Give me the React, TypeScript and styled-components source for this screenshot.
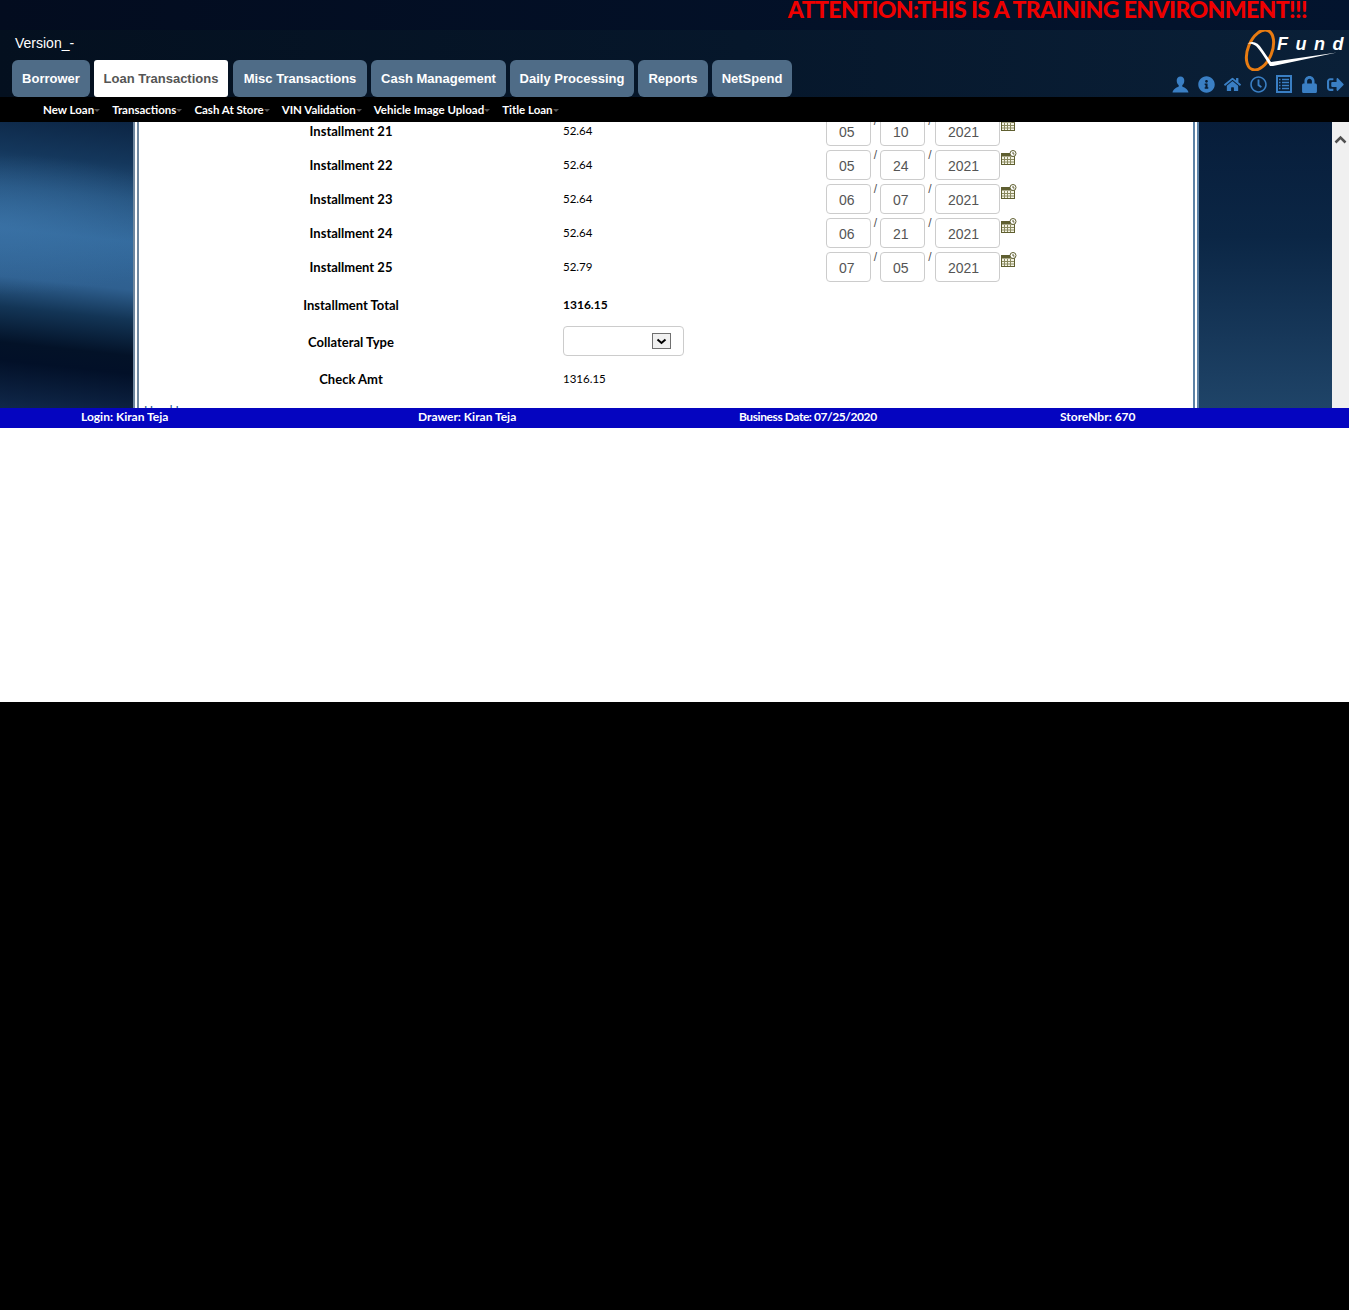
import React from 'react';
import styled, { createGlobalStyle } from 'styled-components';
import { FaInfoCircle, FaHome, FaRegClock, FaLock, FaSignOutAlt } from 'react-icons/fa';

const GlobalStyle = createGlobalStyle`
    html, body {
        margin: 0;
        padding: 0;
        background: #000;
    }
`;

const Page = styled.div`
    height: 702px;
    background: #fff;
    overflow: hidden;
    font-family: Lato, "Liberation Sans", sans-serif;
`;

const Header = styled.header`
    height: 97px;
    background: linear-gradient(90deg, #04101f 0%, #06172b 55%, #0a2038 100%);
`;

const TopStrip = styled.div`
    height: 30px;
    overflow: hidden;
    background: linear-gradient(90deg, #030c1f 0%, #03142e 100%);
    text-align: right;
    padding-right: 42px;
`;

const Attention = styled.div`
    margin-top: -6px;
    color: #f00000;
    font-weight: 900;
    font-size: 23px;
    line-height: 30px;
    letter-spacing: -0.6px;
`;

const HeaderBody = styled.div`
    display: flex;
    justify-content: space-between;
`;

const HeaderLeft = styled.div`
    padding-left: 12px;
`;

const Version = styled.div`
    height: 30px;
    padding: 5px 0 0 3px;
    box-sizing: border-box;
    color: #fff;
    font: 14px/17px "Liberation Sans", sans-serif;
`;

const Tabs = styled.nav`
    display: flex;
    gap: 4px;
`;

const Tab = styled.div<{ $active?: boolean; $width: number }>`
    width: ${({ $width }) => $width}px;
    height: 37px;
    text-align: center;
    border-radius: 6px;
    font: bold 13px/37px "Liberation Sans", sans-serif;
    color: ${({ $active }) => ($active ? '#555' : '#fff')};
    background: ${({ $active }) => ($active ? '#fff' : '#4f6c87')};
    ${({ $active }) => $active && 'margin-right: 1px; border-radius: 3px;'}
`;

const HeaderRight = styled.div`
    display: flex;
    flex-direction: column;
    align-items: flex-end;
    padding-right: 5px;
`;

const Logo = styled.div`
    position: relative;
    width: 100px;
    height: 41px;
    svg {
        display: block;
    }
`;

const LogoText = styled.span`
    position: absolute;
    left: 33px;
    top: 3px;
    color: #fff;
    font: italic bold 18px/22px "Liberation Sans", sans-serif;
    letter-spacing: 7.5px;
`;

const ToolIcons = styled.div`
    display: flex;
    align-items: center;
    height: 26px;
    gap: 9px;
    color: #3a7fc4;
    font-size: 17px;
    svg {
        display: block;
    }
`;

const SubNav = styled.nav`
    height: 25px;
    background: #000;
    display: flex;
    align-items: center;
    gap: 12px;
    padding-left: 43px;
`;

const SubItem = styled.span`
    color: #fff;
    font-size: 11.5px;
    font-weight: 700;
    &::after {
        content: '';
        display: inline-block;
        vertical-align: 2px;
        border-left: 3px solid transparent;
        border-right: 3px solid transparent;
        border-top: 3px solid #555;
    }
`;

const Main = styled.main`
    height: 286px;
    display: grid;
    grid-template-columns: 133px 1066px 133px 17px;
    overflow: hidden;
`;

const SideLeft = styled.div`
    background:
        radial-gradient(ellipse 200px 70px at 0% 36%, rgba(62, 118, 170, 0.55), rgba(62, 118, 170, 0) 100%),
        linear-gradient(186deg, #0c2544 0%, #14375c 14%, #25537f 26%, #336a9d 40%, #2f6090 56%, #133556 66%, #031228 78%, #021028 84%, #10284a 100%);
`;

const SideRight = styled.div`
    background: linear-gradient(180deg, #071d3a 0%, #0b2645 40%, #1f4468 100%);
`;

const Panel = styled.div`
    background: #fff;
    border-left: 6px double #6f879f;
    border-right: 6px double #5c82a6;
    overflow: hidden;
`;

const FormTable = styled.div`
    margin-top: -8px;
    display: grid;
    grid-template-columns: 422px 264px 1fr;
    margin-left: 1px;
`;

const Row = styled.div<{ $height: number }>`
    grid-column: 1 / -1;
    display: grid;
    grid-template-columns: subgrid;
    align-items: center;
    height: ${({ $height }) => $height}px;
`;

const Label = styled.div`
    text-align: center;
    color: #000;
    font-size: 13px;
    font-weight: 700;
`;

const Value = styled.div<{ $bold?: boolean }>`
    padding: 0 0 2px 1px;
    color: #000;
    font-size: ${({ $bold }) => ($bold ? '12px' : '11.5px')};
    font-weight: ${({ $bold }) => ($bold ? 700 : 400)};
`;

const DateCell = styled.div`
    align-self: start;
    padding-top: 2px;
    display: flex;
    align-items: flex-start;
`;

const DateBox = styled.div<{ $width: number }>`
    width: ${({ $width }) => $width}px;
    height: 30px;
    box-sizing: border-box;
    padding-left: 12px;
    border: 1px solid #ccc;
    border-radius: 4px;
    color: #555;
    font: 14px/30px "Liberation Sans", sans-serif;
`;

const Slash = styled.span<{ $width: number }>`
    width: ${({ $width }) => $width}px;
    margin-top: -2px;
    text-align: center;
    color: #555;
    font: 12px/14px "Liberation Sans", sans-serif;
`;

const CalendarIcon = styled.svg`
    margin: 0 0 0 1px;
`;

const SelectBox = styled.div`
    width: 121px;
    height: 30px;
    box-sizing: border-box;
    border: 1px solid #ccc;
    border-radius: 4px;
    display: flex;
    align-items: center;
    justify-content: flex-end;
    padding-right: 12px;
`;

const SelectArrow = styled.div`
    width: 19px;
    height: 16px;
    box-sizing: border-box;
    border: 1px solid #707070;
    background: #f0f0f0;
    display: flex;
    align-items: center;
    justify-content: center;
`;

const CutLine = styled.div`
    margin: 3px 0 0 5px;
    color: #1c4f8c;
    font-size: 12px;
    line-height: 14px;
`;

const ScrollBar = styled.div`
    background: #f0f0f0;
    display: flex;
    justify-content: center;
    padding-top: 13px;
    box-sizing: border-box;
`;

const StatusBar = styled.footer`
    height: 20px;
    box-sizing: border-box;
    padding: 0 0 3px 81px;
    background: #0505c0;
    display: grid;
    grid-template-columns: 337px 321px 321px 1fr;
    align-items: center;
`;

const StatusItem = styled.span<{ $tight?: boolean }>`
    color: #fff;
    font-size: 12px;
    font-weight: 700;
    ${({ $tight }) => $tight && 'letter-spacing: -0.42px;'}
`;

const tabs = [
    { name: 'Borrower', width: 78 },
    { name: 'Loan Transactions', width: 134 },
    { name: 'Misc Transactions', width: 134 },
    { name: 'Cash Management', width: 135 },
    { name: 'Daily Processing', width: 124 },
    { name: 'Reports', width: 70 },
    { name: 'NetSpend', width: 80 },
];
const subItems = ['New Loan', 'Transactions', 'Cash At Store', 'VIN Validation', 'Vehicle Image Upload', 'Title Loan'];
const installments = [
    { label: 'Installment 21', amount: '52.64', date: ['05', '10', '2021'] },
    { label: 'Installment 22', amount: '52.64', date: ['05', '24', '2021'] },
    { label: 'Installment 23', amount: '52.64', date: ['06', '07', '2021'] },
    { label: 'Installment 24', amount: '52.64', date: ['06', '21', '2021'] },
    { label: 'Installment 25', amount: '52.79', date: ['07', '05', '2021'] },
];

const Calendar = () => (
    <CalendarIcon width="16" height="15" viewBox="0 0 16 15">
        <rect x="0.5" y="3.5" width="13" height="11" fill="#f4f3e4" stroke="#5f5f30" />
        <rect x="0.5" y="3.5" width="13" height="3" fill="#5f5f30" />
        <path d="M3.5 7v7M6.5 7v7M9.5 7v7M1 9.5h12M1 12h12" stroke="#8a8a60" strokeWidth="1" />
        <circle cx="12" cy="3.5" r="3" fill="#fff" stroke="#5f5f30" />
        <path d="M12 2v2h1.5" fill="none" stroke="#5f5f30" strokeWidth="1" />
    </CalendarIcon>
);

const App: React.FC = () => {
    return (
        <Page>
            <GlobalStyle />
            <Header>
                <TopStrip>
                    <Attention>ATTENTION:THIS IS A TRAINING ENVIRONMENT!!!</Attention>
                </TopStrip>
                <HeaderBody>
                    <HeaderLeft>
                        <Version>Version_-</Version>
                        <Tabs>
                            {tabs.map((tab) => (
                                <Tab key={tab.name} $width={tab.width} $active={tab.name === 'Loan Transactions'}>{tab.name}</Tab>
                            ))}
                        </Tabs>
                    </HeaderLeft>
                    <HeaderRight>
                        <Logo>
                            <svg width="100" height="41" viewBox="0 0 100 41">
                                <ellipse cx="16" cy="20" rx="12" ry="21" transform="rotate(22 16 20)" fill="none" stroke="#e87c12" strokeWidth="3" />
                                <path d="M3 14 C8 10 14 12 18 19 L27 32 L93 22.5 L29 36 L26 36 C21 28 16 20 12 16 C9 14 6 13 3 14Z" fill="#fff" />
                            </svg>
                            <LogoText>Fund</LogoText>
                        </Logo>
                        <ToolIcons>
                            <svg width="17" height="17" viewBox="0 0 17 17">
                                <path d="M8.5 0.5c-2.5 0-3.8 2-3.8 4.2 0 2 1 3.6 2 4.4v1.4C5 11.5 1 12.8.5 16.5h16c-.5-3.7-4.5-5-6.2-6v-1.4c1-.8 2-2.4 2-4.4 0-2.2-1.3-4.2-3.8-4.2z" fill="currentColor" />
                            </svg>
                            <FaInfoCircle />
                            <FaHome />
                            <FaRegClock />
                            <svg width="16" height="18" viewBox="0 0 16 18">
                                <rect x="1" y="1" width="14" height="16" fill="none" stroke="currentColor" strokeWidth="2" />
                                <path d="M3 4.5h1.5M6 4.5h7M3 7.5h1.5M6 7.5h7M3 10.5h1.5M6 10.5h7M3 13.5h1.5M6 13.5h7" stroke="currentColor" strokeWidth="1.4" />
                            </svg>
                            <FaLock />
                            <FaSignOutAlt />
                        </ToolIcons>
                    </HeaderRight>
                </HeaderBody>
            </Header>
            <SubNav>
                {subItems.map((item) => (
                    <SubItem key={item}>{item}</SubItem>
                ))}
            </SubNav>
            <Main>
                <SideLeft />
                <Panel>
                    <FormTable>
                        {installments.map((row) => (
                            <Row key={row.label} $height={34}>
                                <Label>{row.label}</Label>
                                <Value>{row.amount}</Value>
                                <DateCell>
                                    <DateBox $width={45}>{row.date[0]}</DateBox>
                                    <Slash $width={9}>/</Slash>
                                    <DateBox $width={45}>{row.date[1]}</DateBox>
                                    <Slash $width={10}>/</Slash>
                                    <DateBox $width={65}>{row.date[2]}</DateBox>
                                    <Calendar />
                                </DateCell>
                            </Row>
                        ))}
                        <Row $height={42}>
                            <Label>Installment Total</Label>
                            <Value $bold>1316.15</Value>
                        </Row>
                        <Row $height={32}>
                            <Label>Collateral Type</Label>
                            <Value>
                                <SelectBox>
                                    <SelectArrow>
                                        <svg width="11" height="7" viewBox="0 0 11 7">
                                            <path d="M1.5 1.5 L5.5 5 L9.5 1.5" fill="none" stroke="#000" strokeWidth="2" />
                                        </svg>
                                    </SelectArrow>
                                </SelectBox>
                            </Value>
                        </Row>
                        <Row $height={42}>
                            <Label>Check Amt</Label>
                            <Value>1316.15</Value>
                        </Row>
                    </FormTable>
                    <CutLine>Hand I</CutLine>
                </Panel>
                <SideRight />
                <ScrollBar>
                    <svg width="13" height="9" viewBox="0 0 13 9">
                        <path d="M1.5 7.5 L6.5 2.5 L11.5 7.5" fill="none" stroke="#505050" strokeWidth="2.5" />
                    </svg>
                </ScrollBar>
            </Main>
            <StatusBar>
                <StatusItem>Login: Kiran Teja</StatusItem>
                <StatusItem>Drawer: Kiran Teja</StatusItem>
                <StatusItem $tight>Business Date: 07/25/2020</StatusItem>
                <StatusItem>StoreNbr: 670</StatusItem>
            </StatusBar>
        </Page>
    );
};

export default App;
